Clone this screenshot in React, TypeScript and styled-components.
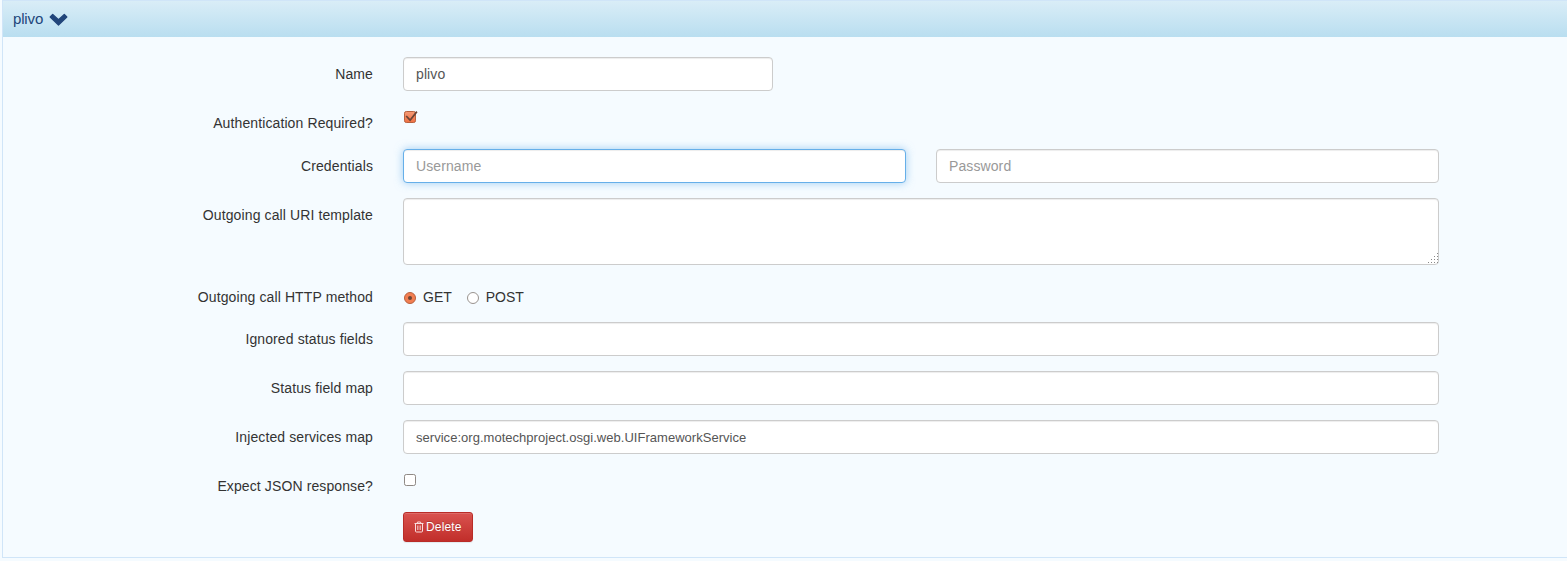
import React from 'react';
import styled, { createGlobalStyle, css } from 'styled-components';

const GlobalStyle = createGlobalStyle`
  * { box-sizing: border-box; }
  html { overflow: hidden; background: #f5fbff; }
  body {
    margin: 0;
    background: #f5fbff;
    font-family: "Liberation Sans", Arial, sans-serif;
    font-size: 14px;
    line-height: 20px;
    color: #333;
    overflow: hidden;
  }
`;

const Panel = styled.section`
  margin-left: 2px;
  height: 558px;
  border: 1px solid #d0e5f8;
  border-right: 0;
  background: #f5fbff;
`;

const PanelHeader = styled.header`
  display: flex;
  align-items: center;
  gap: 6px;
  height: 36px;
  padding-left: 10px;
  background: linear-gradient(#d9edf7, #b9def0);
  color: #21457a;
`;

const PanelTitle = styled.span`
  width: 30px;
  font-size: 15px;
  letter-spacing: -0.15px;
`;

const Form = styled.form`
  display: flex;
  flex-direction: column;
  gap: 15px;
  padding: 20px 128px 0 0;
`;

const Row = styled.div<{ $height?: number }>`
  display: grid;
  grid-template-columns: 370px minmax(0, 1fr);
  column-gap: 30px;
  height: ${({ $height }) => $height ?? 34}px;
`;

const Label = styled.label`
  padding-top: 7px;
  text-align: right;
  letter-spacing: 0.11px;
`;

const Fields = styled.div`
  display: flex;
  align-items: flex-start;
  gap: 30px;
`;

const control = css`
  display: block;
  border: 1px solid #ccc;
  border-radius: 4px;
  background: #fff;
  color: #555;
  font-family: inherit;
  box-shadow: inset 0 1px 1px rgba(0, 0, 0, 0.075);
  outline: 0;
  &::placeholder { color: #999; opacity: 1; }
`;

const TextInput = styled.input<{ $width?: number; $active?: boolean; $small?: boolean }>`
  ${control}
  flex: ${({ $width }) => ($width ? `0 0 ${$width}px` : '1 1 0')};
  min-width: 0;
  height: 34px;
  padding: 6px 12px;
  font-size: ${({ $small }) => ($small ? 13 : 14)}px;
  letter-spacing: ${({ $small }) => ($small ? 0.03 : 0.1)}px;
  ${({ $active }) =>
    $active &&
    css`
      border-color: #66afe9;
      box-shadow: inset 0 1px 1px rgba(0, 0, 0, 0.075), 0 0 8px rgba(102, 175, 233, 0.6);
    `}
`;

const TextAreaFrame = styled.div`
  position: relative;
  flex: 1;
`;

const TextArea = styled.textarea`
  ${control}
  width: 100%;
  height: 67px;
  padding: 6px 12px;
  font-size: 14px;
  line-height: 20px;
  resize: none;
`;

const Grip = styled.svg`
  position: absolute;
  right: 1px;
  bottom: 2px;
`;

const Mark = styled.svg`
  display: block;
  flex: none;
`;

const CheckCell = styled.div`
  padding: 4px 0 0;
`;

const RadioGroup = styled.div`
  display: flex;
  gap: 14px;
  padding-top: 7px;
`;

const RadioLabel = styled.label`
  display: flex;
  gap: 6px;
  height: 20px;
`;

const RadioMark = styled(Mark)`
  margin-top: 4px;
`;

const DeleteButton = styled.button`
  display: flex;
  align-items: center;
  gap: 2px;
  width: 70px;
  height: 30px;
  padding: 0 10px;
  border: 1px solid #b92c28;
  border-radius: 3px;
  background: linear-gradient(#d9534f, #c12e2a);
  color: #fff;
  font-family: inherit;
  font-size: 12px;
  line-height: 18px;
  letter-spacing: 0.15px;
  white-space: nowrap;
  text-shadow: 0 -1px 0 rgba(0, 0, 0, 0.2);
  box-shadow: inset 0 1px 0 rgba(255, 255, 255, 0.15), 0 1px 1px rgba(0, 0, 0, 0.075);
`;

const Chevron = () => (
  <Mark width="19" height="14" viewBox="0 0 19 14">
    <path d="M1.2 5 3.7 2.5 9.5 7.8l5.8-5.3L17.8 5l-8.3 8z" fill="#21457a" stroke="#21457a" strokeWidth="1.3" strokeLinejoin="round" />
  </Mark>
);

const Check = ({ checked }: { checked?: boolean }) => (
  <Mark width="15" height="15" viewBox="0 0 15 15">
    <defs>
      <linearGradient id="check-fill" x2="0" y2="1">
        <stop stopColor="#f59a75" />
        <stop offset="1" stopColor="#ef7043" />
      </linearGradient>
    </defs>
    <rect x="1.5" y="1.5" width="11" height="11" rx="1.8"
      fill={checked ? 'url(#check-fill)' : '#fff'} stroke={checked ? '#b8603d' : '#8f8985'} />
    {checked && <path d="m3.2 6 3.9 4.2 6.8-8.6" fill="none" stroke="#6b4435" strokeWidth="1.7" />}
  </Mark>
);

const Radio = ({ checked }: { checked?: boolean }) => (
  <RadioMark width="14" height="14" viewBox="0 0 14 14">
    <circle cx="7" cy="7" r="5.5" fill={checked ? '#f27e51' : '#fff'} stroke={checked ? '#b8603d' : '#99938f'} />
    {checked && <circle cx="7" cy="7" r="2" fill="#6b4435" />}
  </RadioMark>
);

const Trash = () => (
  <Mark width="10" height="12" viewBox="0 0 10 12" fill="none" stroke="#f9dede">
    <path d="M.5 2.5h9M3 2.5l.5-1.5h3L7 2.5M1.5 2.5v7.5q0 1 1 1h5q1 0 1-1V2.5" />
    <path d="M3.5 4.5v4.5M5 4.5v4.5M6.5 4.5v4.5" strokeWidth=".65" />
  </Mark>
);

const gripDots = [[9, 0], [6, 3], [9, 3], [3, 6], [6, 6], [9, 6], [0, 9], [3, 9], [6, 9], [9, 9]];

export default function App() {
  return (
    <>
      <GlobalStyle />
      <Panel>
        <PanelHeader>
          <PanelTitle>plivo</PanelTitle>
          <Chevron />
        </PanelHeader>
        <Form>
          <Row>
            <Label>Name</Label>
            <Fields><TextInput $width={370} defaultValue="plivo" /></Fields>
          </Row>
          <Row $height={28}>
            <Label>Authentication Required?</Label>
            <CheckCell><Check checked /></CheckCell>
          </Row>
          <Row>
            <Label>Credentials</Label>
            <Fields>
              <TextInput $active placeholder="Username" />
              <TextInput placeholder="Password" />
            </Fields>
          </Row>
          <Row $height={67}>
            <Label>Outgoing call URI template</Label>
            <Fields>
              <TextAreaFrame>
                <TextArea />
                <Grip width="10" height="10" viewBox="0 0 10 10">
                  {gripDots.map(([x, y]) => (
                    <rect key={`${x}-${y}`} x={x} y={y} width="1" height="1" fill="#888" />
                  ))}
                </Grip>
              </TextAreaFrame>
            </Fields>
          </Row>
          <Row $height={27}>
            <Label>Outgoing call HTTP method</Label>
            <RadioGroup>
              <RadioLabel><Radio checked />GET</RadioLabel>
              <RadioLabel><Radio />POST</RadioLabel>
            </RadioGroup>
          </Row>
          <Row>
            <Label>Ignored status fields</Label>
            <Fields><TextInput /></Fields>
          </Row>
          <Row>
            <Label>Status field map</Label>
            <Fields><TextInput /></Fields>
          </Row>
          <Row>
            <Label>Injected services map</Label>
            <Fields><TextInput $small defaultValue="service:org.motechproject.osgi.web.UIFrameworkService" /></Fields>
          </Row>
          <Row $height={28}>
            <Label>Expect JSON response?</Label>
            <CheckCell><Check /></CheckCell>
          </Row>
          <Row $height={30}>
            <span />
            <DeleteButton type="button"><Trash />Delete</DeleteButton>
          </Row>
        </Form>
      </Panel>
    </>
  );
}
